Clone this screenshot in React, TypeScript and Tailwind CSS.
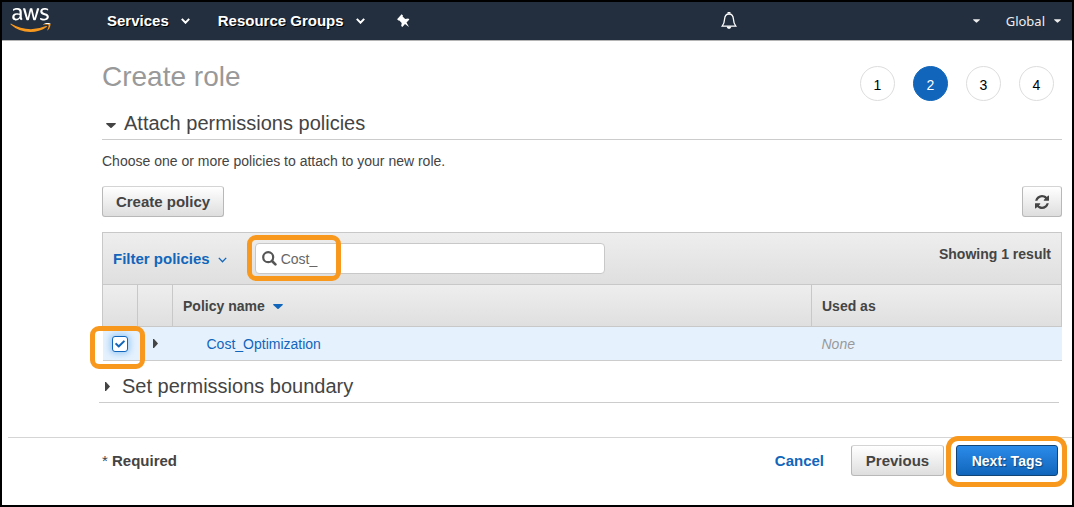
import { useState } from "react";
import type { ReactNode } from "react";
import { FaAws, FaCheck } from "react-icons/fa";

function CaretDown({ className }: { className: string }) {
  return (
    <svg viewBox="0 0 10 5" className={className} fill="currentColor" aria-hidden="true">
      <path d="M0.6 0H9.4L10 0.8L5.6 4.8Q5 5.2 4.4 4.8L0 0.8Z" />
    </svg>
  );
}

function CaretRight() {
  return (
    <svg viewBox="0 0 5 9" className="h-[9px] w-[5px]" fill="currentColor" aria-hidden="true">
      <path d="M0 0H1L5 4.5L1 9H0Z" />
    </svg>
  );
}

function Chevron({ className }: { className: string }) {
  return (
    <svg viewBox="0 0 9 6" className={className} fill="none" stroke="currentColor" aria-hidden="true">
      <path d="M0.8 0.9L4.5 4.7L8.2 0.9" />
    </svg>
  );
}

function AwsLogo() {
  return (
    <a href="#home" aria-label="AWS" className="mt-[2px] block">
      <svg className="absolute h-0 w-0" aria-hidden="true">
        <defs>
          <linearGradient id="aws-fill" gradientUnits="userSpaceOnUse" x1="0" y1="0" x2="0" y2="512">
            <stop offset="0.62" stopColor="#ffffff" />
            <stop offset="0.62" stopColor="#f7981f" />
          </linearGradient>
        </defs>
      </svg>
      <FaAws className="h-8 w-[41px]" fill="url(#aws-fill)" />
    </a>
  );
}

function Pin() {
  return (
    <svg viewBox="0 0 13 14" className="h-[14px] w-[13px]" fill="#fff" aria-hidden="true">
      <path d="M4.6 0.2L6 1.6L5.6 2.6L8.2 5L11.2 4.4L12.4 5.6L9.5 8.6L12 13L8 10.1L5.4 13L4.2 11.9L4.7 9L2.3 6.4L1.4 6.6L0.1 5.2Z" />
    </svg>
  );
}

function Bell() {
  return (
    <svg viewBox="0 0 16 18" className="h-[18px] w-4" fill="none" stroke="#fff" strokeWidth="1.3" aria-hidden="true">
      <path d="M8 2C5.2 2 3.8 4.1 3.6 7C3.4 10.4 2.8 12.2 1.2 14.2H14.8C13.2 12.2 12.6 10.4 12.4 7C12.2 4.1 10.8 2 8 2Z" />
      <path d="M7.2 1.6V0.6H8.8V1.6" />
      <path d="M5.6 14.6Q6 17 8 17T10.4 14.6Z" fill="#fff" stroke="none" />
    </svg>
  );
}

function Refresh() {
  return (
    <svg viewBox="0 0 1536 1536" className="size-[14px]" fill="currentColor" aria-hidden="true">
      <path d="M1511 928q0 5-1 7-64 268-268 434.500T764 1536q-146 0-282.500-55T238 1324l-129 129q-19 19-45 19t-45-19-19-45V960q0-26 19-45t45-19h448q26 0 45 19t19 45-19 45l-137 137q71 66 161 102t187 36q134 0 250-65t186-179q11-17 53-117 8-23 30-23h192q13 0 22.500 9.500t9.500 22.500zm25-800v448q0 26-19 45t-45 19h-448q-26 0-45-19t-19-45 19-45l138-138Q969 256 768 256q-134 0-250 65T332 500q-11 17-53 117-8 23-30 23H50q-13 0-22.500-9.500T18 608v-7q65-268 270-434.500T768 0q146 0 284 55.500T1297 212l130-129q19-19 45-19t45 19 19 45z" />
    </svg>
  );
}

function SearchIcon() {
  return (
    <svg viewBox="0 0 15 15" className="size-[15px]" fill="none" stroke="#555" aria-hidden="true">
      <circle cx="6.2" cy="6.2" r="5" strokeWidth="2.2" />
      <path d="M10 10L13.4 13.4" strokeWidth="2.6" strokeLinecap="round" />
    </svg>
  );
}

function GreyButton({ children, label, className }: { children: ReactNode; label?: string; className: string }) {
  return (
    <button
      type="button"
      aria-label={label}
      className={`flex h-[31px] items-center justify-center rounded-[3px] border border-[#b8b8b8] border-t-[#d4d4d4] bg-linear-to-b from-white to-[#dedede] text-[15px] font-bold text-[#444] ${className}`}
    >
      {children}
    </button>
  );
}

const steps = [1, 2, 3, 4];

export default function App() {
  const [query, setQuery] = useState("Cost_");
  const [checked, setChecked] = useState(true);

  return (
    <div className="flex min-h-screen flex-col border-2 border-black bg-white font-['Liberation_Sans',Arial,sans-serif] text-sm leading-5 text-[#444]">
      <header className="flex h-[39px] items-start border-b border-[#b5b5b5] bg-[#232f3e] pr-[11px] pl-2 text-white">
        <AwsLogo />
        <nav className="flex h-[38px] grow items-center text-[15px] font-bold">
          <button type="button" className="ml-14 flex items-center gap-3 text-shadow-[1px_1px_0_#000]">
            Services
            <Chevron className="h-[6px] w-[9px] stroke-2" />
          </button>
          <button type="button" className="ml-7 flex items-center gap-3 text-shadow-[1px_1px_0_#000]">
            Resource Groups
            <Chevron className="h-[6px] w-[9px] stroke-2" />
          </button>
          <button type="button" aria-label="Pin shortcuts" className="ml-8">
            <Pin />
          </button>
        </nav>
        <div className="flex h-[38px] items-center">
          <button type="button" aria-label="Notifications" className="mr-[236px]">
            <Bell />
          </button>
          <button type="button" aria-label="Account" className="mr-[26px]">
            <CaretDown className="h-1 w-[7px] text-[#eee]" />
          </button>
          <button type="button" className="flex items-center gap-[9px] font-['Noto_Sans',sans-serif] text-[13px] text-[#eee]">
            Global
            <CaretDown className="h-1 w-[7px]" />
          </button>
        </div>
      </header>

      <main className="pr-[10px] pl-[100px]">
        <div className="flex items-start justify-between pt-[18px]">
          <h1 className="text-[28px] leading-9 text-[#999]">Create role</h1>
          <ol className="flex gap-[18px] pt-[7px] pr-2 text-sm text-black">
            {steps.map((n) => (
              <li
                key={n}
                aria-current={n === 2 ? "step" : undefined}
                className={`flex size-[35px] items-center justify-center rounded-full border pt-[2px] ${
                  n === 2 ? "border-[#1166bb] bg-[#1166bb] text-white" : "border-[#ddd]"
                }`}
              >
                {n}
              </li>
            ))}
          </ol>
        </div>

        <h2 className="mt-2 border-b border-[#ccc] pb-[2px] text-xl leading-7">
          <button type="button" aria-expanded="true" className="flex items-center gap-2 pl-1">
            <CaretDown className="mt-1 h-[5px] w-[10px]" />
            Attach permissions policies
          </button>
        </h2>
        <p className="mt-[11px]">Choose one or more policies to attach to your new role.</p>

        <div className="mt-[15px] flex justify-between">
          <GreyButton className="w-[122px]">Create policy</GreyButton>
          <GreyButton className="w-10" label="Refresh">
            <Refresh />
          </GreyButton>
        </div>

        <section className="mt-[15px]">
          <div className="flex h-[52px] items-center border border-b-0 border-[#c8c8c8] bg-linear-to-b from-[#eee] to-[#dfdfdf] px-[10px]">
            <button type="button" className="flex items-center gap-2 text-[15px] font-bold text-[#1166bb]">
              Filter policies
              <Chevron className="mt-[2px] h-[6px] w-[9px] stroke-[1.3]" />
            </button>
            <label className="relative ml-7 flex h-[31px] w-[350px] items-center gap-1 rounded-[4px] border border-[#c8c8c8] bg-white pl-[6px]">
              <SearchIcon />
              <input
                type="text"
                aria-label="Filter policies by name"
                value={query}
                onChange={(e) => setQuery(e.target.value)}
                className="min-w-0 grow bg-transparent text-sm text-[#666] outline-none"
              />
              <span className="pointer-events-none absolute -top-[9px] -left-[9px] h-[46px] w-[94px] rounded-[9px] border-[5px] border-[#f8981d]" />
            </label>
            <span className="ml-auto pb-[9px] font-bold">Showing 1 result</span>
          </div>
          <table className="w-full table-fixed border-collapse text-left">
            <colgroup>
              <col className="w-[35px]" />
              <col className="w-[35px]" />
              <col />
              <col className="w-[250px]" />
            </colgroup>
            <thead>
              <tr className="h-[42px] bg-linear-to-b from-[#eee] to-[#dfdfdf]">
                <th className="border border-[#c8c8c8]" aria-label="Select" />
                <th className="border border-[#c8c8c8]" aria-label="Expand" />
                <th className="border border-[#c8c8c8] px-[10px]">
                  <button type="button" className="flex items-center gap-2 font-bold">
                    Policy name
                    <CaretDown className="mt-px h-[5px] w-[10px] text-[#1166bb]" />
                  </button>
                </th>
                <th className="border border-[#c8c8c8] px-[10px]">Used as</th>
              </tr>
            </thead>
            <tbody>
              <tr className="h-[34px] border-b border-[#ccc] bg-[#e5f1fd]">
                <td>
                  <label className="relative ml-[9px] block size-4">
                    <input
                      type="checkbox"
                      aria-label="Select Cost_Optimization"
                      checked={checked}
                      onChange={(e) => setChecked(e.target.checked)}
                      className="block size-4 appearance-none rounded-[3px] border border-[#1166bb] bg-white shadow-[0_0_6px_2px_#9ccbf5]"
                    />
                    {checked && <FaCheck className="pointer-events-none absolute top-[3px] left-[3px] size-[10px] text-[#1166bb]" />}
                    <span className="pointer-events-none absolute -top-[10px] -left-[22px] h-[43px] w-[55px] rounded-[9px] border-[5px] border-[#f8981d]" />
                  </label>
                </td>
                <td>
                  <button type="button" aria-label="Expand row" className="ml-[15px] block">
                    <CaretRight />
                  </button>
                </td>
                <td className="pl-[34px]">
                  <a href="#policy" className="text-[#1166bb]">
                    Cost_Optimization
                  </a>
                </td>
                <td className="pl-[10px] text-[#999] italic">None</td>
              </tr>
            </tbody>
          </table>
        </section>

        <h2 className="mt-[11px] mr-[3px] -ml-[3px] border-b border-[#ccc] pb-[2px] text-xl leading-7">
          <button type="button" aria-expanded="false" className="flex items-center gap-3 pl-[6px]">
            <CaretRight />
            Set permissions boundary
          </button>
        </h2>
      </main>

      <footer className="mt-[34px] ml-[6px] flex items-center border-t border-[#d5d5d5] pt-[7px] pr-[14px] pl-[94px]">
        <span className="text-[15px] font-bold">
          <span className="font-normal">*</span> Required
        </span>
        <a href="#cancel" className="mr-[27px] ml-auto text-[15px] font-bold text-[#1166bb]">
          Cancel
        </a>
        <GreyButton className="mr-3 w-[93px]">Previous</GreyButton>
        <div className="relative">
          <button
            type="button"
            className="flex h-[31px] w-[102px] items-center justify-center rounded-[3px] border border-[#114477] bg-linear-to-b from-[#2b8bea] to-[#1166bb] font-bold text-white text-shadow-[1px_1px_1px_#114477]"
          >
            Next: Tags
          </button>
          <span className="pointer-events-none absolute -top-[9px] -left-[10px] h-[51px] w-[121px] rounded-[12px] border-[5px] border-[#f8981d]" />
        </div>
      </footer>
    </div>
  );
}
